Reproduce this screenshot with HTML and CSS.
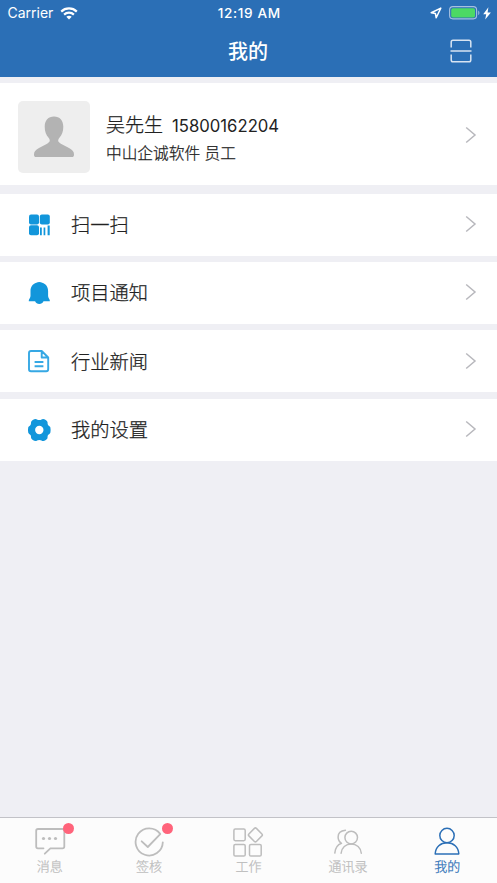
FILE: index.html
```html
<!DOCTYPE html>
<html lang="zh-CN">
<head>
<meta charset="utf-8">
<title>我的</title>
<link rel="stylesheet" href="styles.css">
</head>
<body>
<div class="app">
  <header class="header">
    <div class="status">
      <div class="status-left"><span class="carrier">Carrier</span>
        <svg class="wifi" width="18" height="13" viewBox="0 0 18 13" fill="none" stroke="#fff" stroke-width="2.2"><path d="M1.2 4.6C5.5.4 12.5.4 16.8 4.6M4.1 7.6c2.7-2.6 7.1-2.6 9.8 0"/><path d="M6.3 9.7c1.5-1.4 3.9-1.4 5.4 0L9 12.4z" fill="#fff" stroke="none"/></svg>
      </div>
      <time class="clock">12:19 AM</time>
      <div class="status-right">
        <svg width="12" height="12" viewBox="0 0 12 12" fill="none" stroke="#fff" stroke-width="1.5" stroke-linejoin="round"><path d="M10.8 1.1 1.2 5.7l4.2.8.8 4.3z"/></svg>
        <svg class="battery" width="32" height="14" viewBox="0 0 32 14"><rect x=".6" y=".6" width="27" height="12.3" rx="3.3" fill="none" stroke="#a7c1e0" stroke-width="1.1"/><rect x="2.2" y="2.2" width="23.8" height="9.2" rx="1.7" fill="#4cd964"/><path d="M29 4.4c2 .8 2 3.8 0 4.6z" fill="#84a9d5"/></svg>
        <svg class="bolt" width="8" height="13" viewBox="0 0 8 13"><path d="M5.4.3.2 7.200h3L2.200 12.600 7.900 5.500H4.600z" fill="#fff"/></svg>
      </div>
    </div>
    <div class="navbar">
      <h1>我的</h1>
      <svg class="scan" width="22" height="24" viewBox="0 0 22 24" fill="none" stroke="#d8e4f2" stroke-width="1.5"><path d="M1.2 8.6V3Q1.2 1.2 3 1.2h16q1.8 0 1.8 1.8v5.6M.5 12h21M1.2 15.6V21q0 1.8 1.8 1.8h16q1.8 0 1.8-1.8v-5.4"/></svg>
    </div>
  </header>

  <main class="content">
    <section class="profile">
      <div class="avatar"><svg width="72" height="72" viewBox="0 0 72 72"><path d="M36 15.600c-5.800 0-9.300 4-9.300 10.200 0 5 1.500 8.200 3.700 10.800 2.300 2.800 1.700 4.400-1.300 6.200l-8.100 4.100c-3.600 2-5 3.600-5 6.500 0 1.800.7 2.600 2.200 2.600h35.600c1.500 0 2.200-.8 2.200-2.600 0-2.900-1.400-4.500-5-6.500l-8.100-4.100c-3-1.800-3.600-3.400-1.300-6.200 2.200-2.600 3.700-5.800 3.700-10.800 0-6.200-3.500-10.200-9.300-10.200z" fill="#b3b3b3"/></svg></div>
      <div class="person"><div class="name">吴先生<span>15800162204</span></div><div class="company">中山企诚软件 员工</div></div>
      <svg class="arrow" width="12" height="18" viewBox="0 0 12 18"><path d="m1.2 1.5 8.8 7.5-8.8 7.5"/></svg>
    </section>
    <nav class="menu">
      <a class="row">
        <svg class="icon" width="24" height="24" viewBox="0 0 24 24" fill="#1296db"><rect x="2" y="1.500" width="10" height="10" rx="2"/><rect x="12.800" y="1.500" width="10" height="10" rx="2"/><rect x="2" y="12.300" width="10" height="10" rx="2"/><path d="M13 14.500h1.800v7.800H13zM16.600 14.500h1.700v7.800h-1.700zM20.600 12.500h2.100v9.800h-2.100z"/></svg>
        <span>扫一扫</span><svg class="arrow" width="12" height="18" viewBox="0 0 12 18"><path d="m1.2 1.5 8.8 7.5-8.8 7.5"/></svg>
      </a>
      <a class="row">
        <svg class="icon" width="24" height="24" viewBox="0 0 24 24" fill="#1296db"><path d="M12.300.9c-1.100 0-2.200.3-2.900.9C5.600 3 3.500 6 3.500 10v5c0 2-1.700 3-1.700 4.600v.7h6.300c.8 1.700 2.300 2.600 4.200 2.600s3.400-.9 4.200-2.600h6.300v-.7c0-1.600-1.700-2.600-1.700-4.600v-5c0-4-2.100-7-5.900-8.200-.7-.6-1.800-.9-2.900-.9z"/></svg>
        <span>项目通知</span><svg class="arrow" width="12" height="18" viewBox="0 0 12 18"><path d="m1.200 1.500 8.800 7.500-8.800 7.500"/></svg>
      </a>
      <a class="row">
        <svg class="icon" width="24" height="24" viewBox="0 0 24 24" fill="none" stroke="#36a8e4" stroke-width="1.900" stroke-linejoin="round"><path d="M14.700 2H4Q2 2 2 4v16.300q0 2 2 2h15.200q2 0 2-2V8.500zM14.700 2v6.500h6.500M7.600 13h8.800M7.600 17.300h8.800"/></svg>
        <span>行业新闻</span><svg class="arrow" width="12" height="18" viewBox="0 0 12 18"><path d="m1.200 1.500 8.800 7.500-8.800 7.500"/></svg>
      </a>
      <a class="row">
        <svg class="icon" width="24" height="24" viewBox="0 0 24 24"><path fill="#1296db" fill-rule="evenodd" d="M8.600 1c1.200 0 1.500 1.100 3.700 1.100S14.800 1 16 1c1.600 0 4.300 1.600 4.500 3 .2 1.200-.1 1.900.6 3 .7 1 2 1.200 2.300 2.600.3 1.500.3 3.300 0 4.800-.3 1.400-1.600 1.600-2.300 2.600-.7 1.100-.4 1.800-.6 3-.2 1.400-2.900 3-4.500 3-1.200 0-1.500-1.100-3.700-1.100S9.800 23 8.600 23c-1.600 0-4.300-1.600-4.500-3-.2-1.200.1-1.900-.6-3-.7-1-2-1.200-2.300-2.600-.3-1.500-.3-3.300 0-4.800.3-1.400 1.600-1.600 2.300-2.600.7-1.100.4-1.800.6-3 .2-1.400 2.900-3 4.500-3zM12.300 7.800a4.200 4.200 0 1 0 0 8.400 4.200 4.200 0 0 0 0-8.400z"/></svg>
        <span>我的设置</span><svg class="arrow" width="12" height="18" viewBox="0 0 12 18"><path d="m1.200 1.500 8.800 7.500-8.800 7.500"/></svg>
      </a>
    </nav>
  </main>

  <footer class="tabs">
    <a class="tab"><svg width="32" height="32" viewBox="0 0 32 32"><path d="M9.500 23.300H4Q2.200 23.300 2.200 21.500V5.800Q2.200 4 4 4h24.500q1.800 0 1.800 1.800v15.700q0 1.800-1.800 1.800H16.400l-5.600 5.400"/><g fill="#bdbdbd" stroke="none"><circle cx="9.500" cy="13.500" r="1.600"/><circle cx="15.500" cy="13.500" r="1.600"/><circle cx="21.500" cy="13.500" r="1.600"/></g></svg><span>消息</span><i class="badge"></i></a>
    <a class="tab"><svg width="32" height="32" viewBox="0 0 32 32"><path d="M27.200 8.900A13.600 13.600 0 1 0 29.800 17.300M8.700 16.300l6.100 5.700L27.200 9.200"/></svg><span>签核</span><i class="badge"></i></a>
    <a class="tab thin"><svg width="32" height="32" viewBox="0 0 32 32"><rect x="1.900" y="4" width="11.300" height="11.700" rx="1.400"/><rect x="1.900" y="19.400" width="11.300" height="11.700" rx="1.400"/><rect x="17.500" y="19.400" width="11.700" height="11.700" rx="1.400"/><rect x="18.100" y="4.600" width="10.600" height="10.600" rx="1.400" transform="rotate(45 23.400 9.900)"/></svg><span>工作</span></a>
    <a class="tab thin"><svg width="32" height="32" viewBox="0 0 32 32"><circle cx="19.200" cy="12.600" r="6.300"/><path d="M13.400 5.300c-4.800.5-7.300 3.300-7.300 6.700 0 2.900 1.400 5.100 3.400 6.300-4 1.500-6.300 5-6.700 9.800M9.100 28.300c.4-5.700 4.700-9.400 10.100-9.400s9.700 3.700 10.100 9.400"/></svg><span>通讯录</span></a>
    <a class="tab active thin"><svg width="32" height="32" viewBox="0 0 32 32"><circle cx="16" cy="10.500" r="7.200"/><path d="M4.200 28.900c.4-7 5.200-11.100 11.800-11.100s11.400 4.100 11.800 11.100z"/></svg><span>我的</span></a>
  </footer>
</div>
</body>
</html>
```
FILE: styles.css
```css
* { box-sizing: border-box; }
body { margin: 0; font-family: Inter, "Noto Sans CJK SC", sans-serif; font-weight: 300; color: #222; }
svg { display: block; flex: none; }
.app { height: 883px; display: flex; flex-direction: column; background: #efeff4; overflow: hidden; }
.header { height: 77px; flex: none; background: #2b6fb6; color: #fff; }
.status { height: 26px; padding: 0 6px 0 7.500px; display: grid; grid-template-columns: 1fr auto 1fr; align-items: center; }
.status-left, .status-right { display: flex; align-items: center; }
.status-left { gap: 7px; }
.carrier { font-size: 14px; font-weight: 400; line-height: 26px; }
.clock { font-size: 13.600px; font-weight: 500; letter-spacing: .6px; }
.status-right { justify-content: flex-end; }
.battery { margin-left: 7px; }
.bolt { margin-left: 2px; }
.navbar { height: 51px; padding: 0 25px 0 47px; display: grid; grid-template-columns: 1fr auto 1fr; align-items: center; }
.navbar h1 { grid-column: 2; margin: 0; padding-right: 1px; font-size: 20px; line-height: 28px; font-weight: 500; transform: translate(-11px, 0); }
.scan { justify-self: end; margin-top: -2px; }
.content { flex: 1; padding-top: 6px; }
.profile { height: 102px; padding: 2px 20px 0 18px; display: flex; align-items: center; background: #fff; }
.profile .avatar { margin-top: 4px; width: 72px; height: 72px; border-radius: 5px; background: #eee; }
.person { flex: 1; margin-left: 16px; padding-top: 7px; }
.name, .company, .row span, .tab span { -webkit-text-stroke: .25px currentColor; }
.name { font-size: 19px; line-height: 30px; }
.name span { margin-left: 9px; font-size: 16.700px; font-weight: 400; -webkit-text-stroke: 0; }
.company { font-size: 15.700px; line-height: 26px; }
.arrow { fill: none; stroke: #b8b8bd; stroke-width: 1.500; }
.menu { margin-top: 8.500px; display: grid; gap: 6.400px; }
.row { height: 62px; padding: 0 20px 0 27px; display: flex; align-items: center; background: #fff; }
.row .arrow { margin-top: -1px; }
.row span { flex: 1; margin-left: 20px; padding-top: 1px; font-size: 19.300px; line-height: 28px; }
.tabs { height: 66px; flex: none; border-top: 1px solid #c2c2c7; background: #fcfcfc; display: grid; grid-template-columns: repeat(5, 1fr); }
.tab { position: relative; padding-top: 6.500px; display: flex; flex-direction: column; align-items: center; color: #bdbdbd; }
.tab svg { fill: none; stroke: currentColor; stroke-width: 1.800; stroke-linejoin: round; stroke-linecap: round; }
.tab.thin svg { stroke-width: 1.500; }
.tab span { font-size: 13px; line-height: 20px; margin-top: -.5px; }
.tab.active { color: #2b6fb6; }
.badge { position: absolute; top: 5px; left: calc(50% + 13px); width: 11px; height: 11px; border-radius: 50%; background: #ff647b; }
```
